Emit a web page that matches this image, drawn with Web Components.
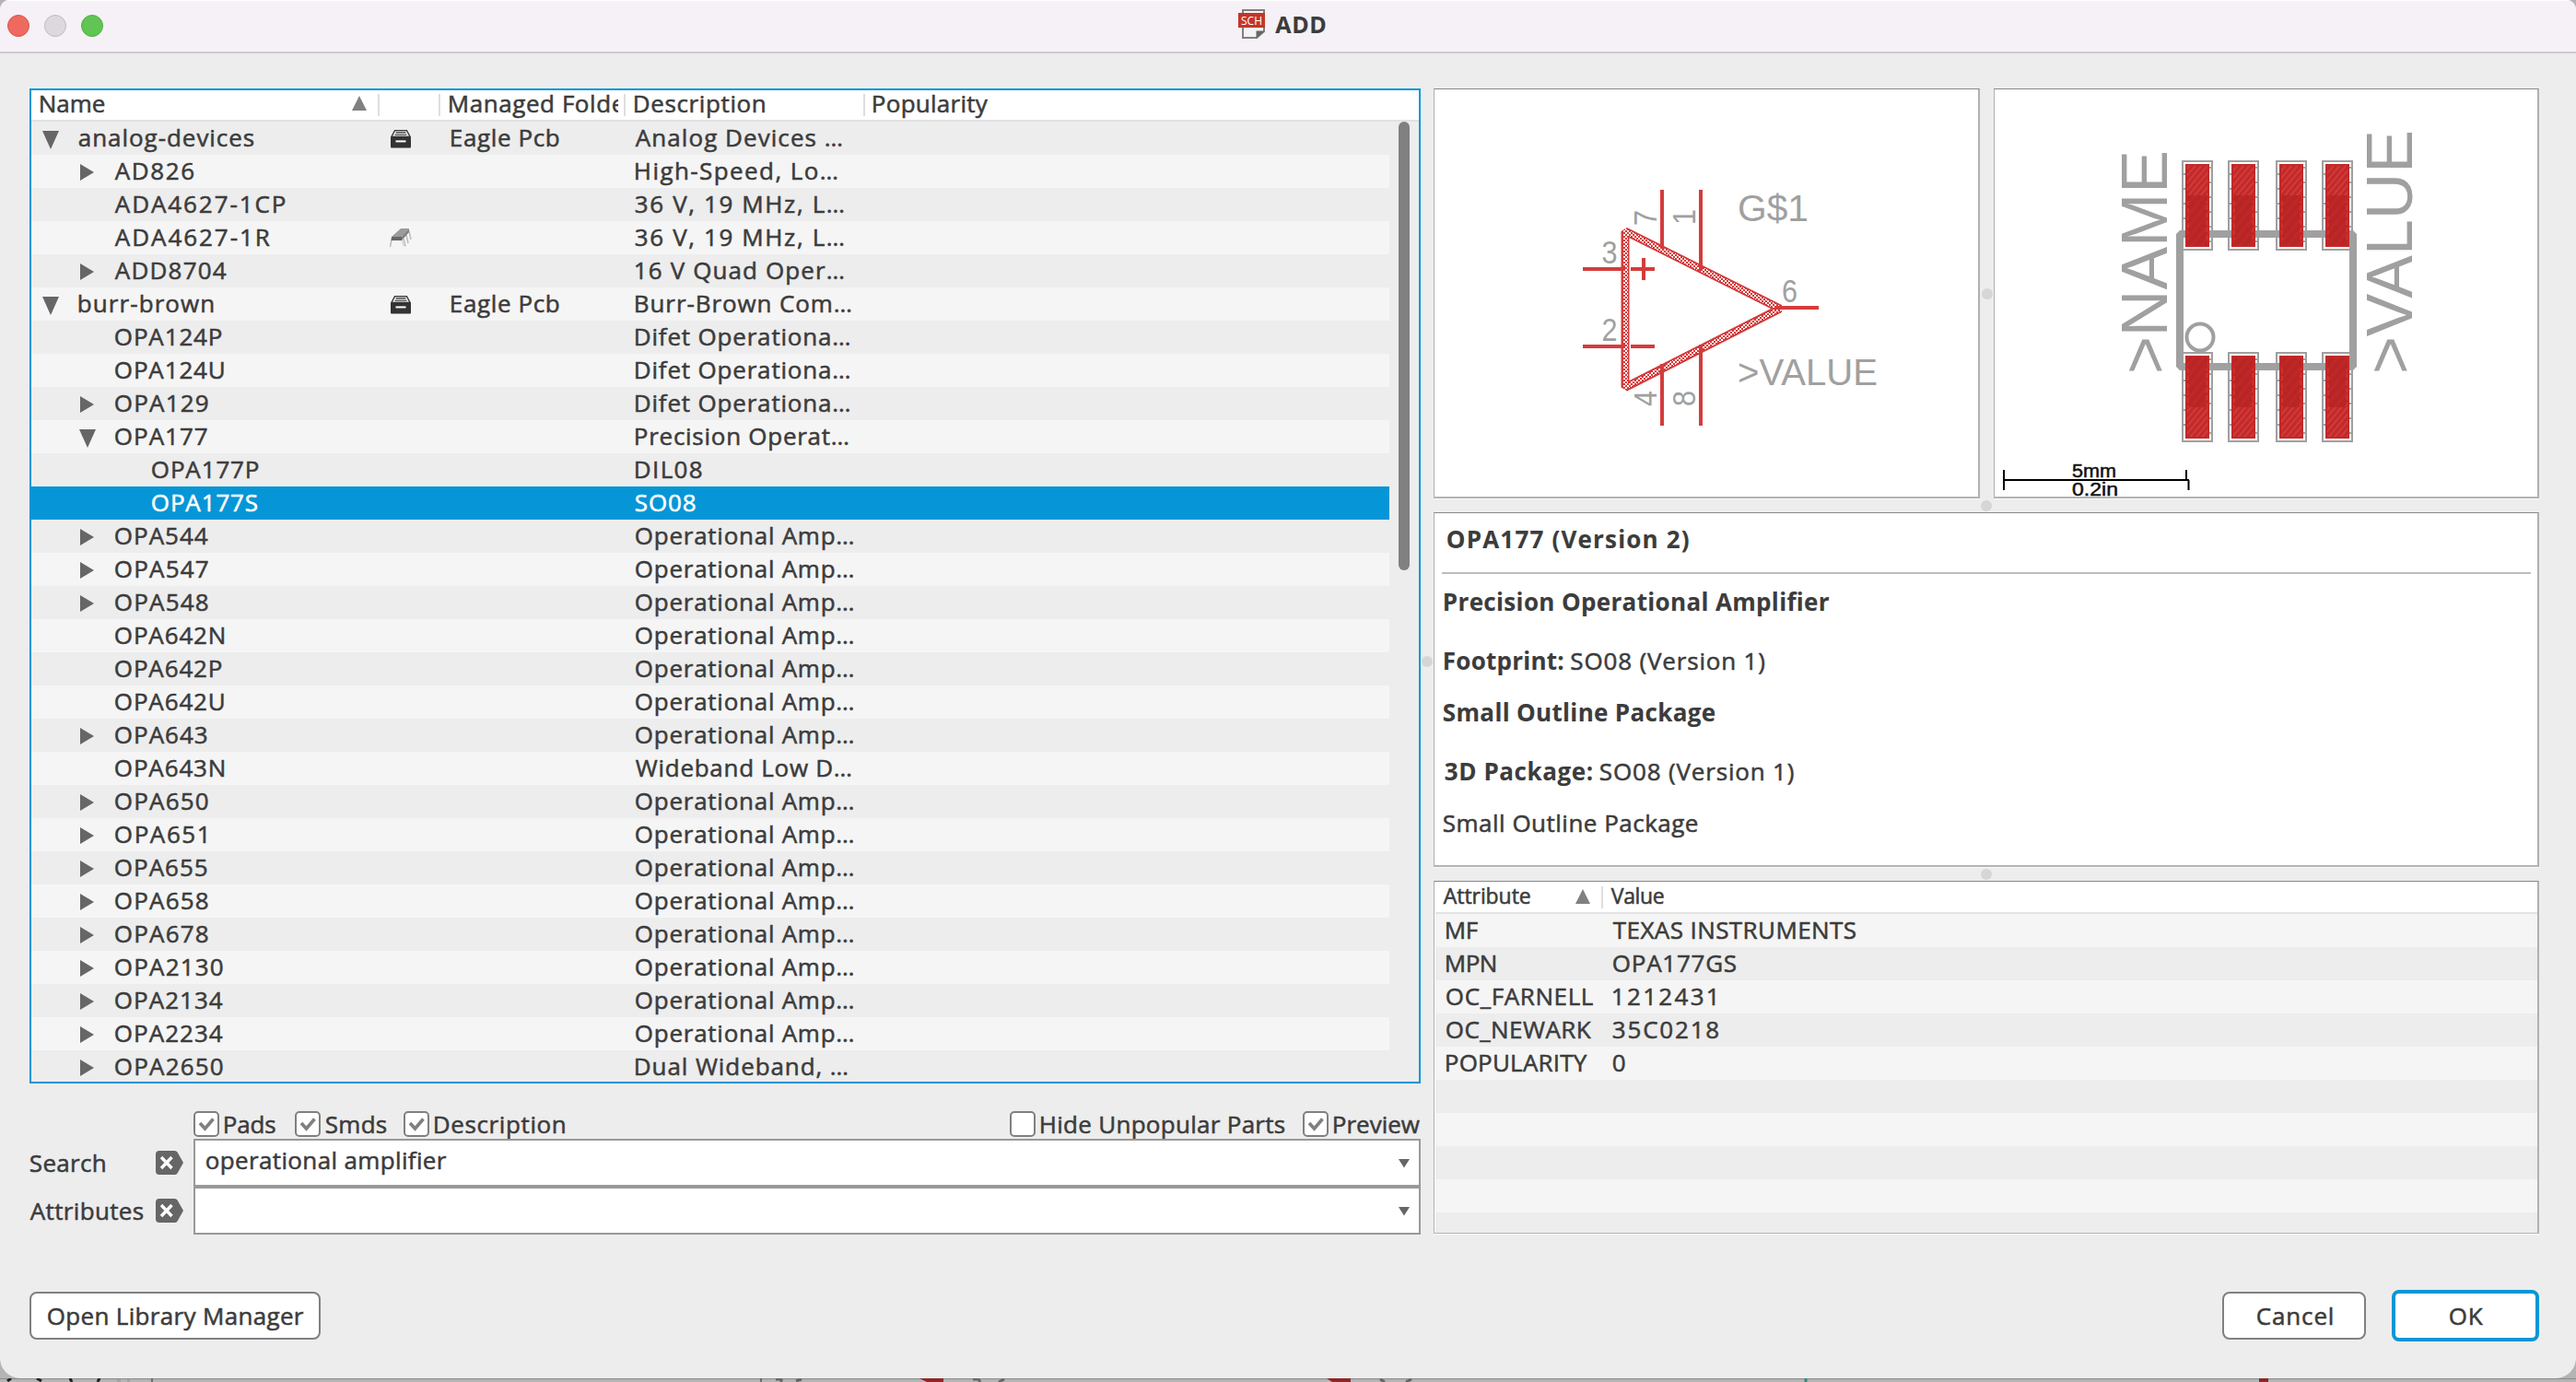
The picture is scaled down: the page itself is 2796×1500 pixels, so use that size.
<!DOCTYPE html>
<html lang="en">
<head>
<meta charset="utf-8">
<title>ADD</title>
<style>
html,body{margin:0;padding:0}
body{width:2796px;height:1500px;overflow:hidden;font-family:"Open Sans","Noto Sans",sans-serif;font-size:26px;color:#3c3c3c;background:#b0b0b0}
</style>
</head>
<body>
<add-dialog></add-dialog>
<script>
const cx = document.createElement('canvas').getContext('2d');

/* Text run spread to an exact ink width through letter spacing. */
class FitText extends HTMLElement {
  connectedCallback() {
    const w = parseFloat(this.getAttribute('w'));
    const size = parseFloat(this.getAttribute('size') || 26);
    const lh = parseFloat(this.getAttribute('lh') || 34);
    const weight = this.getAttribute('weight') || 400;
    const text = this.textContent;
    cx.font = `${weight} ${size}px "Open Sans","Noto Sans",sans-serif`;
    const m = cx.measureText(text);
    const ink = m.actualBoundingBoxLeft + m.actualBoundingBoxRight;
    const n = [...text].length;
    const ls = n > 1 ? (w - ink) / (n - 1) : 0;
    this.attachShadow({mode: 'open'}).innerHTML = `<style>
      :host{display:block;flex:none;width:${w}px;height:${lh}px;font-size:${size}px;line-height:${lh}px;font-weight:${weight};white-space:pre}
      span{display:block;width:max-content;margin-left:${m.actualBoundingBoxLeft + .8}px;letter-spacing:${ls.toFixed(3)}px;-webkit-text-stroke:${weight > 500 ? .1 : .55}px currentColor}
    </style><span><slot></slot></span>`;
  }
}
customElements.define('fit-text', FitText);

const define = (name, html) => customElements.define(name, class extends HTMLElement {
  connectedCallback() {
    if (this.shadowRoot) return;
    this.attachShadow({mode: 'open'}).innerHTML = typeof html === 'function' ? html(this) : html;
  }
});

define('tri-mark', el => {
  const d = {down: ['18', '20', '0,0 18,0 9,20'], right: ['15', '18', '0,0 15,9 0,18'], up: ['16', '16', '0,16 16,16 8,0'], small: ['16', '10', '2,0 14,0 8,9.5']}[el.getAttribute('dir')];
  return `<style>:host{display:block;flex:none;width:${d[0]}px;height:${d[1]}px;color:#666}svg{display:block}</style>
  <svg width="${d[0]}" height="${d[1]}"><polygon points="${d[2]}" fill="currentColor"/></svg>`;
});

define('drawer-icon', `<style>:host{display:block;width:22px;height:20px}svg{display:block}</style>
<svg width="22" height="20" viewBox="0 0 22 20"><path d="M4.5.7h13l3.6 6.8H.9z" fill="#eee" stroke="#333" stroke-width="1.3"/><path d="M5.6 2.9h10.8M4.6 5.2h12.8" stroke="#333" stroke-width="1.1"/><rect x="0" y="7.5" width="22" height="12" rx="1" fill="#333"/><rect x="5.5" y="11.4" width="11" height="2" fill="#fff"/></svg>`);

define('chip-icon', `<style>:host{display:block;width:26px;height:22px}svg{display:block}</style>
<svg width="26" height="22" viewBox="0 0 26 22"><path d="M3 13L1.5 21M16 12l2 8.500M19 8l2 9M22 4l2 9" stroke="#bbb" stroke-width="1.500" fill="none"/><path d="M14 13l2 7" stroke="#ccc"/><path d="M3 10L13 1h9l-8 9z" fill="#9b9b9b"/><path d="M3 10h11v4H2.500z" fill="#666"/><path d="M14 10l8-9v4l-8 9z" fill="#808080"/></svg>`);

define('clear-tag', `<style>:host{display:block;width:30px;height:26px;flex:none}svg{display:block}</style>
<svg width="30" height="26" viewBox="0 0 30 26"><path d="M4 0H20.500Q22.500 0 23.500 1.500L30 13L23.500 24.500Q22.500 26 20.500 26H4Q0 26 0 22V4Q0 0 4 0z" fill="#666"/><path d="M6 7l11.500 12M17.500 7L6 19" stroke="#fff" stroke-width="3.400"/></svg>`);

define('check-box', el => `<style>
:host{display:flex;gap:5px;height:28px}
.b{box-sizing:border-box;width:28px;height:28px;border:2px solid #808080;border-radius:5px;background:#fff}
svg{display:block}
</style><div class="b">${el.hasAttribute('checked') ? '<svg width="24" height="24"><path d="M5 11l5.500 6L19.500 6.500" fill="none" stroke="#808080" stroke-width="3.600"/></svg>' : ''}</div><slot></slot>`);

define('combo-field', `<style>
:host{box-sizing:border-box;display:flex;align-items:flex-start;justify-content:space-between;width:1332px;height:52px;border:2px solid #999;background:#fff;padding:4px 8px 0 11px}
tri-mark{margin-top:16px}
.t{height:34px}
</style><div class="t"><slot></slot></div><tri-mark dir="small"></tri-mark>`);

define('push-button', `<style>
:host{box-sizing:border-box;display:flex;justify-content:center;height:52px;border:2px solid #808080;border-radius:8px;background:#fff;padding-top:7px}
:host([primary]){height:56px;border:4px solid #0696d7}
</style><slot></slot>`);

define('split-dot', `<style>:host{display:flex;align-items:center;justify-content:center}
i{width:12px;height:12px;border-radius:50%;background:#d6d6d6}</style><i></i>`);

/* Parts tree: [level, arrow, name, nameWidth, icon, folder, description, descWidth] */
const O = ['Operational Amp…', 236.500], D = ['Difet Operationa…', 232.500];
const parts = [
  [0, 'down', 'analog-devices', 190, 'drawer', 1, 'Analog Devices …', 224],
  [1, 'right', 'AD826', 85.500, '', 0, 'High-Speed, Lo…', 219],
  [1, '', 'ADA4627-1CP', 185, '', 0, '36 V, 19 MHz, L…', 226],
  [1, '', 'ADA4627-1R', 168, 'chip', 0, '36 V, 19 MHz, L…', 226],
  [1, 'right', 'ADD8704', 121, '', 0, '16 V Quad Oper…', 226],
  [0, 'down', 'burr-brown', 145.500, 'drawer', 1, 'Burr-Brown Com…', 234],
  [1, '', 'OPA124P', 116, '', 0, ...D],
  [1, '', 'OPA124U', 118, '', 0, ...D],
  [1, 'right', 'OPA129', 101, '', 0, ...D],
  [1, 'down', 'OPA177', 100, '', 0, 'Precision Operat…', 231],
  [2, '', 'OPA177P', 116, '', 0, 'DIL08', 72],
  [2, '', 'OPA177S', 115, '', 0, 'SO08', 65],
  [1, 'right', 'OPA544', 101, '', 0, ...O],
  [1, 'right', 'OPA547', 101, '', 0, ...O],
  [1, 'right', 'OPA548', 101, '', 0, ...O],
  [1, '', 'OPA642N', 119, '', 0, ...O],
  [1, '', 'OPA642P', 116, '', 0, ...O],
  [1, '', 'OPA642U', 118, '', 0, ...O],
  [1, 'right', 'OPA643', 100, '', 0, ...O],
  [1, '', 'OPA643N', 119, '', 0, 'Wideband Low D…', 234],
  [1, 'right', 'OPA650', 101, '', 0, ...O],
  [1, 'right', 'OPA651', 99, '', 0, ...O],
  [1, 'right', 'OPA655', 100, '', 0, ...O],
  [1, 'right', 'OPA658', 101, '', 0, ...O],
  [1, 'right', 'OPA678', 101, '', 0, ...O],
  [1, 'right', 'OPA2130', 117, '', 0, ...O],
  [1, 'right', 'OPA2134', 117, '', 0, ...O],
  [1, 'right', 'OPA2234', 117, '', 0, ...O],
  [1, 'right', 'OPA2650', 117, '', 0, 'Dual Wideband, …', 230]
];

define('part-tree', () => `<style>
:host{box-sizing:border-box;display:flex;flex-direction:column;width:1510px;height:1080px;border:2px solid #0696d7;background:#ededed;overflow:hidden}
.head{box-sizing:border-box;flex:none;display:flex;height:34px;background:#fff;border-bottom:2px solid #e2e2e2}
.h{box-sizing:border-box;height:32px;display:flex}
.clip{overflow-x:clip;overflow-y:visible}
.sep{width:2px;height:24px;margin-top:4px;background:#dedede;flex:none}
.body{display:flex;height:1042px;overflow:hidden}
.rows{width:1474px;flex:none}
.r{display:grid;grid-template-columns:376px 79px 200px 1fr;height:36px;background:#ededed}
.r:nth-child(even){background:#f5f5f5}
.r.sel{background:#0696d7;color:#fff}
.n{display:flex}
.a{box-sizing:border-box;flex:none;height:36px}
.l0 .a{width:51px;padding:10px 0 0 12px}
.l1 .a{width:90px;padding:10px 0 0 53px}
.l2 .a{width:130px}
.l1 tri-mark[dir=down]{margin-left:-1px}
.i{padding:9px 0 0 14px}
.i chip-icon{margin:-2px 0 0 -2px}
.bar{width:12px;height:487px;border-radius:6px;background:#808080;margin-left:10px}
</style>
<div class="head">
<div class="h" style="width:376px;padding-left:9px"><fit-text w="70" lh="29">Name</fit-text><tri-mark dir="up" style="margin:6px 0 0 269px;color:#808080"></tri-mark></div>
<div class="sep"></div><div class="h" style="width:64px"></div>
<div class="sep"></div><div class="h clip" style="width:193px;padding-left:9px"><fit-text w="202" lh="29">Managed Folder</fit-text></div>
<div style="width:6px"></div><div class="sep"></div><div class="h" style="width:258px;padding-left:9px"><fit-text w="141" lh="29">Description</fit-text></div>
<div class="sep"></div><div class="h" style="padding-left:8px"><fit-text w="125" lh="29">Popularity</fit-text></div>
</div>
<div class="body"><div class="rows">${parts.map((p, i) => `<div class="r l${p[0]}${i === 11 ? ' sel' : ''}">
<div class="n"><div class="a">${p[1] ? `<tri-mark dir="${p[1]}"></tri-mark>` : ''}</div><fit-text w="${p[3]}">${p[2]}</fit-text></div>
<div class="i">${p[4] ? `<${p[4]}-icon></${p[4]}-icon>` : ''}</div>
<div>${p[5] ? '<fit-text w="117">Eagle Pcb</fit-text>' : ''}</div>
<fit-text w="${p[7]}">${p[6]}</fit-text></div>`).join('')}</div><div class="bar"></div></div>`);

define('search-form', `<style>
:host{display:block;width:1510px;padding-top:30px}
.checks{display:flex;height:30px;padding:0 2px 0 178px}
.line{display:flex;height:52px}
.lab{width:137px;padding-top:9px}
clear-tag{margin-top:13px;margin-right:11px}
</style>
<div class="checks">
<check-box checked><fit-text w="55.500" lh="28">Pads</fit-text></check-box>
<check-box checked style="margin-left:21.500px"><fit-text w="66" lh="28">Smds</fit-text></check-box>
<check-box checked style="margin-left:19px"><fit-text w="141" lh="28">Description</fit-text></check-box>
<check-box style="margin-left:auto"><fit-text w="265" lh="28">Hide Unpopular Parts</fit-text></check-box>
<check-box checked style="margin-left:20px"><fit-text w="93" lh="28">Preview</fit-text></check-box>
</div>
<div class="line"><div class="lab"><fit-text w="81">Search</fit-text></div><clear-tag></clear-tag><combo-field><fit-text w="261">operational amplifier</fit-text></combo-field></div>
<div class="line"><div class="lab"><fit-text w="123">Attributes</fit-text></div><clear-tag></clear-tag><combo-field></combo-field></div>`);

define('view-panel', `<style>
:host{box-sizing:border-box;display:block;background:#fff;border:1px solid #b0b0b0;border-top-color:#888;border-right-width:2px;border-bottom:2px solid #b4b4b4;overflow:hidden;box-shadow:0 1px 0 #fafafa}
</style><slot></slot>`);

define('symbol-view', `<style>:host{display:block}svg{display:block}text{font-family:"Liberation Sans",sans-serif;fill:#a0a0a0}</style>
<svg width="590" height="442" viewBox="1557 97 590 442">
<defs><pattern id="k" width="4" height="4" patternUnits="userSpaceOnUse"><rect width="2" height="2" fill="#fff"/><rect x="2" y="2" width="2" height="2" fill="#fff"/></pattern></defs>
<g font-size="35" >
<text x="1738.500" y="286" textLength="17" lengthAdjust="spacingAndGlyphs">3</text>
<text x="1738.500" y="370" textLength="17" lengthAdjust="spacingAndGlyphs">2</text>
<text x="1934" y="327.500" textLength="17" lengthAdjust="spacingAndGlyphs">6</text>
<text transform="translate(1797.500 245) rotate(-90)" textLength="17" lengthAdjust="spacingAndGlyphs">7</text>
<text transform="translate(1840 244) rotate(-90)" textLength="17" lengthAdjust="spacingAndGlyphs">1</text>
<text transform="translate(1797.500 441) rotate(-90)" textLength="17" lengthAdjust="spacingAndGlyphs">4</text>
<text transform="translate(1840 441) rotate(-90)" textLength="17" lengthAdjust="spacingAndGlyphs">8</text>
</g>
<text x="1886" y="240" font-size="41" textLength="77" lengthAdjust="spacingAndGlyphs">G$1</text>
<text x="1886" y="417.500" font-size="41" textLength="152" lengthAdjust="spacingAndGlyphs">&gt;VALUE</text>
<path d="M1764 251V420.500L1932 335z" fill="none" stroke="#d43c3c" stroke-width="9" stroke-linejoin="bevel"/>
<path d="M1764 251V420.500L1932 335z" fill="none" stroke="url(#k)" stroke-width="5" shape-rendering="crispEdges"/>
<path d="M1804 206V270M1846 206V294M1804 395V462M1846 374V462M1718 292H1764M1718 376H1764M1770 292H1796M1784 280V304M1770 376H1796M1926 334H1974" stroke="#d43c3c" stroke-width="4" fill="none"/>
</svg>`);

define('footprint-view', () => {
  const xs = [2368, 2418, 2470, 2520];
  const pad = (x, y, top) => `<rect x="${x + 1}" y="${y + 1}" width="32" height="96" fill="none" stroke="#a0a0a0" stroke-width="2"/>
<path d="M${x + 3} ${y + 14}V${y + 94}M${x + 31} ${y + 7}V${y + 94}" stroke="#a0a0a0" stroke-width="2" stroke-dasharray="2 14"/>
<rect x="${x + 4}" y="${y + 4}" width="26" height="90" fill="#c22929"/>
<rect x="${x + 6}" y="${top ? y + 6 : y + 60}" width="22" height="32" fill="url(#a)"/>
<rect x="${x + 6}" y="${top ? y + 38 : y + 6}" width="22" height="54" fill="url(#b)"/>
<path d="M${x + 7} ${top ? y + 44 : y + 18}v42m20 0v-42" stroke="#cf3535" stroke-width="1.500" stroke-dasharray="5 3"/>`;
  return `<style>:host{display:block}svg{display:block}text{font-family:"Liberation Sans",sans-serif}</style>
<svg width="588" height="442" viewBox="2165 97 588 442">
<defs>
<pattern id="a" width="5" height="5" patternUnits="userSpaceOnUse" patternTransform="rotate(40)"><rect width="5" height="5" fill="#c22929"/><rect width="2" height="5" fill="#d23a3a"/></pattern>
<pattern id="b" width="8" height="8" patternUnits="userSpaceOnUse" patternTransform="rotate(40)"><rect width="8" height="8" fill="#b92424"/><rect width="3" height="8" fill="#bf2828"/></pattern>
</defs>
<g fill="#a0a0a0" font-size="70">
<text transform="translate(2352 406) rotate(-90)" textLength="243" lengthAdjust="spacingAndGlyphs">&gt;NAME</text>
<text transform="translate(2618 406) rotate(-90)" textLength="265" lengthAdjust="spacingAndGlyphs">&gt;VALUE</text></g>
<rect x="2366" y="254" width="188" height="144" fill="none" stroke="#a0a0a0" stroke-width="8" stroke-linejoin="bevel"/>
<circle cx="2388" cy="366" r="14.500" fill="none" stroke="#a0a0a0" stroke-width="4"/>
${xs.map(x => pad(x, 174, true) + pad(x, 382, false)).join('')}
<path d="M2175 521H2376M2175 510V532M2373 510V521M2375.500 521V532" stroke="#000" stroke-width="2" fill="none"/>
<g font-size="20" fill="#111" stroke="#111" stroke-width=".5"><text x="2249" y="518" textLength="48" lengthAdjust="spacingAndGlyphs">5mm</text><text x="2249" y="537.500" textLength="50" lengthAdjust="spacingAndGlyphs">0.2in</text></g>
</svg>`;
});

define('part-info', `<style>
:host{display:block;padding:11px 7px 0 9px}
.l{display:flex}
hr{border:0;height:2px;background:#bdbdbd;margin:19px 0 0 -1px}
</style>
<div class="l" style="padding-left:4px"><fit-text w="262" weight="700">OPA177 (Version 2)</fit-text></div>
<hr>
<div class="l" style="margin:13px 0 0 1px"><fit-text w="418" weight="700">Precision Operational Amplifier</fit-text></div>
<div class="l" style="margin:30px 0 0 1px;gap:9px"><fit-text w="128.500" weight="700">Footprint:</fit-text><fit-text w="210">SO08 (Version 1)</fit-text></div>
<div class="l" style="margin-top:22px"><fit-text w="295" weight="700">Small Outline Package</fit-text></div>
<div class="l" style="margin:30px 0 0 1px;gap:9px"><fit-text w="160" weight="700">3D Package:</fit-text><fit-text w="210">SO08 (Version 1)</fit-text></div>
<div class="l" style="margin-top:22px"><fit-text w="276">Small Outline Package</fit-text></div>`);

const attrs = [['MF', 34, 'TEXAS INSTRUMENTS', 264], ['MPN', 54, 'OPA177GS', 134], ['OC_FARNELL', 159, '1212431', 111], ['OC_NEWARK', 157, '35C0218', 114.500], ['POPULARITY', 153, '0', 15], [], [], [], [], []];
define('attr-table', () => `<style>
:host{display:block;padding-left:1px}
.head{box-sizing:border-box;display:flex;height:35px;border-bottom:2px solid #e2e2e2}
.sep{width:2px;height:24px;margin:5px 8px 0 12px;background:#dedede}
.r{display:grid;grid-template-columns:181px 1fr;height:36px;padding-left:11px;background:#ededed}
.r:nth-child(odd){background:#f5f5f5}
</style>
<div class="head"><fit-text style="margin-left:8px" w="94" size="23" lh="30">Attribute</fit-text><tri-mark dir="up" style="margin:8px 0 0 50px;color:#808080"></tri-mark><div class="sep"></div><fit-text w="57" size="23" lh="30">Value</fit-text></div>
${attrs.map(a => `<div class="r">${a.length ? `<fit-text w="${a[1]}">${a[0]}</fit-text><fit-text w="${a[3]}">${a[2]}</fit-text>` : ''}</div>`).join('')}`);

define('title-bar', `<style>
:host{box-sizing:border-box;display:grid;grid-template-columns:1fr auto 1fr;height:58px;background:#f5f1f6;border-bottom:2px solid #cdc9ce;border-top:1px solid #fff}
.lights{display:flex;gap:16px;padding:15px 0 0 8px}
i{box-sizing:border-box;width:24px;height:24px;border-radius:50%}
.t{display:flex;gap:11px;padding-right:14px}
svg{margin-top:9px;display:block}
text{font-family:"Open Sans",sans-serif}
</style>
<div class="lights"><i style="background:#ee6a5f;border:1px solid #d8564c"></i><i style="background:#dcd8dd;border:1px solid #bfbbc0"></i><i style="background:#61c554;border:1px solid #50ae42"></i></div>
<div class="t"><svg width="29" height="32" viewBox="0 0 29 32"><path d="M5 1H28V24L20 31H5z" fill="#f4f3f4" stroke="#808080" stroke-width="2"/><path d="M19.500 32V23.500H29z" fill="#666"/><rect y="4" width="29" height="16" fill="#c3362b"/><text x="3" y="16.500" font-size="13.500" fill="#fff" textLength="23" lengthAdjust="spacingAndGlyphs">SCH</text></svg>
<fit-text w="55" size="25" weight="700" lh="51">ADD</fit-text></div><div></div>`);

define('add-dialog', `<style>
:host{display:flex;flex-direction:column;width:2796px;height:1500px;background:#b4b4b4}
.win{display:flex;flex-direction:column;height:1496px;background:#ededed;border-radius:10px 10px 22px 22px;overflow:hidden;flex:none}
.main{display:grid;grid-template-columns:1510px 14px 1200px;height:1244px;padding:38px 0 0 32px}
.right{display:flex;flex-direction:column}
.views{display:grid;grid-template-columns:593px 15px 592px;height:445px}
.foot{display:flex;align-items:center;height:56px;margin-top:60px;padding:0 40px 0 32px}
.behind{display:block;height:4px}
</style>
<div class="win">
<title-bar></title-bar>
<div class="main">
<div><part-tree></part-tree><search-form></search-form></div>
<split-dot></split-dot>
<div class="right">
<div class="views"><view-panel><symbol-view></symbol-view></view-panel><split-dot></split-dot><view-panel><footprint-view></footprint-view></view-panel></div>
<split-dot style="height:15px"></split-dot>
<view-panel style="height:385px"><part-info></part-info></view-panel>
<split-dot style="height:15px"></split-dot>
<view-panel style="height:383px;border-bottom-width:1px"><attr-table></attr-table></view-panel>
</div>
</div>
<div class="foot"><push-button style="width:316px"><fit-text w="278">Open Library Manager</fit-text></push-button>
<push-button style="width:156px;margin-left:auto"><fit-text w="82">Cancel</fit-text></push-button>
<push-button primary style="width:160px;margin-left:28px"><fit-text w="36">OK</fit-text></push-button></div>
</div>
<svg class="behind" width="2796" height="4"><rect width="2796" height="1" fill="#8c8c8c"/><path d="M8 3l4-3M40 0l5 3M76 0l2 4M108 0l-2 4" stroke="#222" stroke-width="3"/><path d="M165 0V4M826 0V4" stroke="#555" stroke-width="1.500"/><path d="M127 1h4v3h-4zM138 1h3v3h-3z" fill="#a2a2a2"/><path d="M998 0h26v4h-18zM1440 0h26v4h-20zM2452 0h10v4h-10z" fill="#902626"/><path d="M1056 1h6l2 3M1084 4l6-3M1498 1l5 3M1526 4l6-3M842 1h6v3M864 3l6-2" stroke="#666" stroke-width="3" fill="none"/><path d="M1960 0V4" stroke="#2c8c74" stroke-width="3"/></svg>`);
</script>
</body>
</html>
